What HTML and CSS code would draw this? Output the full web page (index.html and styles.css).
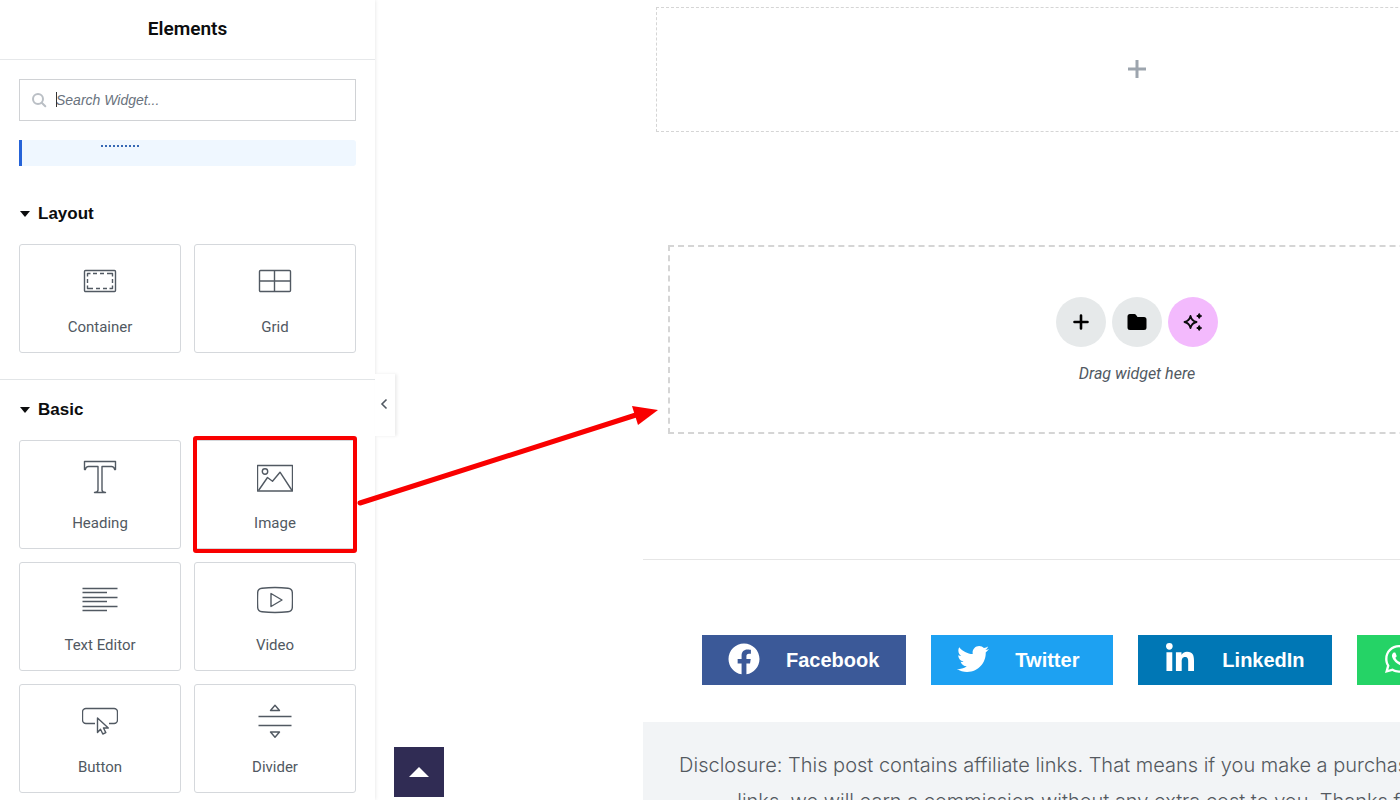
FILE: index.html
```html
<!DOCTYPE html>
<html lang="en">
<head>
    <meta charset="UTF-8">
    <meta name="viewport" content="width=device-width, initial-scale=1.0">
    <title>Elements</title>
    <link rel="stylesheet" href="styles.css">
</head>
<body>
    <aside class="panel">
        <header class="panel-header">
            <h1>Elements</h1>
        </header>

        <div class="panel-top">
            <div class="search">
                <svg width="16" height="16" viewBox="0 0 16 16" aria-hidden="true"><circle cx="7" cy="7" r="5"/><path d="M10.7 10.7l3.6 3.6"/></svg>
                <input type="search" id="search" placeholder="Search Widget..." aria-label="Search Widget">
                <span class="caret"></span>
            </div>
            <div class="notice"><span class="notice-link"></span></div>
        </div>

        <section class="category">
            <h2><button type="button" class="toggle">Layout</button></h2>
            <div class="widgets">
                <button type="button" class="widget">
                    <svg viewBox="0 0 36 36"><rect x="2.5" y="6.5" width="31" height="21" rx="1"/><path d="M5.5 12.5v-3h3M11 9.5h4M18 9.5h4M25 9.5h5.5v3M30.5 15v4M30.5 21.5v3h-3M25 24.5h-4M18 24.5h-4M11 24.5H5.5v-3M5.5 19v-4"/></svg>
                    <span>Container</span>
                </button>
                <button type="button" class="widget">
                    <svg viewBox="0 0 36 36"><rect x="2.5" y="6.5" width="31" height="21" rx="1"/><path d="M17.5 6.5v21M2.5 17h31"/></svg>
                    <span>Grid</span>
                </button>
            </div>
        </section>

        <section class="category bordered">
            <h2><button type="button" class="toggle">Basic</button></h2>
            <div class="widgets">
                <button type="button" class="widget">
                    <svg viewBox="0 0 36 36"><path d="M2.5 1.5h31v8h-.8c-.4-1.800-1.400-3-3.200-3h-9.500v23.500c0 1.600 1 2.300 3.500 2.500h-11c2.500-.2 3.500-.9 3.500-2.500V6.500H6.500c-1.800 0-2.800 1.200-3.200 3h-.8z"/></svg>
                    <span>Heading</span>
                </button>
                <button type="button" class="widget selected">
                    <svg viewBox="0 0 36 36"><rect x=".5" y="5.5" width="35" height="25.5"/><circle cx="8" cy="11.5" r="2.7"/><path d="M1.500 30.500l9-13 5 3.700 7.500-9 12 18.300"/></svg>
                    <span>Image</span>
                </button>
                <button type="button" class="widget">
                    <svg viewBox="0 0 36 36"><path d="M.5 6.500h35M.5 10.500H25M.5 15.500h35M.5 19.500H25M.5 24.500h35M.5 28.500H25"/></svg>
                    <span>Text Editor</span>
                </button>
                <button type="button" class="widget">
                    <svg viewBox="0 0 36 36"><path d="M5 6.200q13-1.400 26 0 4 .5 4.300 4 .4 7.800 0 15.600-.3 3.500-4.300 4-13 1.400-26 0-4-.5-4.300-4-.4-7.800 0-15.600.3-3.500 4.300-4zM14 11.500v13L25 18z"/></svg>
                    <span>Video</span>
                </button>
                <button type="button" class="widget">
                    <svg viewBox="0 0 36 36"><path d="M13 19.500H4a3.500 3.500 0 0 1-3.500-3.500V8A3.500 3.500 0 0 1 4 4.500h28A3.500 3.500 0 0 1 35.500 8v8a3.500 3.500 0 0 1-3.500 3.500h-5M15.500 14v14.500l3-3.200 2.300 4.700 3-1.400-2.300-4.600h4.800z"/></svg>
                    <span>Button</span>
                </button>
                <button type="button" class="widget">
                    <svg viewBox="0 0 36 36"><path d="M18 1.200l4.500 5.300h-9zM1.500 12.500h33M1.500 21.500h33M18 33.300l4.500-5.300h-9z"/></svg>
                    <span>Divider</span>
                </button>
            </div>
        </section>
    </aside>

    <main class="preview">
        <article class="post">
            <div class="section-empty">
                <svg width="18" height="18" viewBox="0 0 18 18" aria-hidden="true"><path d="M9 0v18M0 9h18"/></svg>
            </div>

            <div class="drop-area">
                <div class="drop-buttons">
                    <button type="button" class="round" aria-label="Add new container">
                        <svg width="20" height="20" viewBox="0 0 20 20"><path d="M10 3.500v13M3.500 10h13" fill="none" stroke="#000" stroke-width="2.6" stroke-linecap="round"/></svg>
                    </button>
                    <button type="button" class="round" aria-label="Add template">
                        <svg width="20" height="20" viewBox="0 0 20 20"><path d="M3 2h4.500q.8 0 1.400.7L10.500 5H17q2.500 0 2.500 2.500v8q0 2.500-2.500 2.500H3Q.5 18 .5 15.500v-11Q.5 2 3 2z"/></svg>
                    </button>
                    <button type="button" class="round ai" aria-label="Build with AI">
                        <svg width="20" height="20" viewBox="0 0 20 20"><path d="M7.500 4q1.200 5 6 6-4.800 1-6 6-1.200-5-6-6 4.800-1 6-6z" fill="none" stroke="#0c0d0e" stroke-width="1.8" stroke-linejoin="round"/><path d="M16.200 1.500q.6 2 2.500 2.500-1.900.5-2.500 2.500-.6-2-2.500-2.500 1.900-.5 2.500-2.500zM16.200 13.500q.6 2 2.500 2.500-1.900.5-2.500 2.500-.6-2-2.500-2.500 1.900-.5 2.500-2.500z" stroke="#0c0d0e" stroke-linejoin="round"/></svg>
                    </button>
                </div>
                <p>Drag widget here</p>
            </div>

            <hr>

            <div class="share">
                <a href="#" class="share-btn facebook">
                    <svg viewBox="0 0 512 512"><path d="M504 256C504 119 393 8 256 8S8 119 8 256c0 123.780 90.690 226.380 209.250 245V327.690h-63V256h63v-54.640c0-62.150 37-96.480 93.670-96.480 27.140 0 55.520 4.840 55.520 4.840v61h-31.280c-30.800 0-40.410 19.120-40.410 38.730V256h68.780l-11 71.690h-57.780V501C413.310 482.380 504 379.780 504 256z"/></svg>
                    <span>Facebook</span>
                </a>
                <a href="#" class="share-btn twitter">
                    <svg viewBox="0 0 512 512"><path d="M459.370 151.716c.325 4.548.325 9.097.325 13.645 0 138.720-105.583 298.558-298.558 298.558-59.452 0-114.680-17.219-161.137-47.106 8.447.974 16.568 1.299 25.340 1.299 49.055 0 94.213-16.568 130.274-44.832-46.132-.975-84.792-31.188-98.112-72.772 6.498.974 12.995 1.624 19.818 1.624 9.421 0 18.843-1.300 27.614-3.573-48.081-9.747-84.143-51.980-84.143-102.985v-1.299c13.969 7.797 30.214 12.670 47.431 13.319-28.264-18.843-46.781-51.005-46.781-87.391 0-19.492 5.197-37.360 14.294-52.954 51.655 63.675 129.300 105.258 216.365 109.807-1.624-7.797-2.599-15.918-2.599-24.040 0-57.828 46.782-104.934 104.934-104.934 30.213 0 57.502 12.670 76.670 33.137 23.715-4.548 46.456-13.320 66.599-25.340-7.798 24.366-24.366 44.833-46.132 57.827 21.117-2.273 41.584-8.122 60.426-16.243-14.292 20.791-32.161 39.308-52.628 54.253z"/></svg>
                    <span>Twitter</span>
                </a>
                <a href="#" class="share-btn linkedin">
                    <svg viewBox="0 0 448 512"><path d="M100.280 448H7.400V148.900h92.880zM53.790 108.100C24.090 108.100 0 83.500 0 53.800a53.790 53.790 0 0 1 107.580 0c0 29.700-24.100 54.300-53.790 54.300zM447.900 448h-92.680V302.400c0-34.700-.7-79.200-48.290-79.200-48.290 0-55.690 37.700-55.690 76.700V448h-92.780V148.900h89.080v40.800h1.300c12.400-23.500 42.690-48.300 87.880-48.300 94 0 111.280 61.900 111.280 142.300V448z"/></svg>
                    <span>LinkedIn</span>
                </a>
                <a href="#" class="share-btn whatsapp">
                    <svg viewBox="0 0 448 512"><path d="M380.900 97.100C339 55.100 283.200 32 223.900 32c-122.400 0-222 99.600-222 222 0 39.100 10.200 77.300 29.600 111L0 480l117.700-30.900c32.400 17.700 68.900 27 106.100 27h.1c122.300 0 224.100-99.600 224.100-222 0-59.300-25.200-115-67.100-157zm-157 341.600c-33.200 0-65.700-8.900-94-25.700l-6.700-4-69.800 18.300L72 359.200l-4.400-7c-18.500-29.400-28.200-63.300-28.200-98.200 0-101.700 82.800-184.500 184.600-184.500 49.300 0 95.600 19.200 130.400 54.100 34.800 34.900 56.200 81.200 56.100 130.500 0 101.800-84.900 184.600-186.600 184.600zm101.200-138.200c-5.500-2.800-32.800-16.200-37.900-18-5.100-1.900-8.800-2.800-12.500 2.800-3.700 5.600-14.300 18-17.600 21.800-3.200 3.700-6.500 4.200-12 1.400-32.600-16.300-54-29.100-75.500-66-5.700-9.800 5.700-9.100 16.300-30.300 1.800-3.700.9-6.900-.5-9.700-1.400-2.800-12.500-30.100-17.100-41.200-4.500-10.800-9.100-9.300-12.500-9.500-3.200-.2-6.900-.2-10.600-.2-3.700 0-9.700 1.400-14.800 6.900-5.100 5.600-19.400 19-19.400 46.300 0 27.300 19.900 53.700 22.600 57.400 2.800 3.700 39.100 59.700 94.800 83.800 35.200 15.200 49 16.500 66.600 13.900 10.700-1.600 32.800-13.400 37.400-26.400 4.600-13 4.600-24.100 3.200-26.400-1.300-2.500-5-3.900-10.500-6.600z"/></svg>
                    <span>WhatsApp</span>
                </a>
            </div>

            <p class="disclosure">
                Disclosure: This post contains affiliate links. That means if you make a purchase through any of my<br>
                links, we will earn a commission without any extra cost to you. Thanks for the support.
            </p>
        </article>
    </main>

    <button type="button" class="collapse" aria-label="Hide panel">
        <svg width="8" height="12" viewBox="0 0 8 12"><path d="M6.500 1.500L2 6l4.500 4.500"/></svg>
    </button>
    <a href="#" class="to-top" aria-label="Back to top"></a>

    <!-- arrow from the Image widget to the drop area -->
    <svg class="arrow" width="304" height="108" viewBox="0 0 304 108" aria-hidden="true">
        <path d="M5 103L284 14" fill="none" stroke="#f90000" stroke-width="5" stroke-linecap="round"/>
        <path d="M277 6l26 4-20 15z" fill="#f90000"/>
    </svg>
</body>
</html>
```
FILE: styles.css
```css
* {
    box-sizing: border-box;
}
body {
    margin: 0;
    height: 100vh;
    display: flex;
    overflow: hidden;
    position: relative;
    background: #fff;
    font-family: Roboto, sans-serif;
}
button {
    font-family: inherit;
    padding: 0;
    border: none;
    background: none;
    cursor: pointer;
}

/* left panel */
.panel {
    flex: 0 0 375px;
    overflow: hidden;
    background: #fff;
    box-shadow: 0 0 4px rgba(0, 0, 0, 0.12);
}
.panel-header {
    display: flex;
    align-items: center;
    justify-content: center;
    height: 60px;
    padding-bottom: 3px;
    border-bottom: 1px solid #e6e8ea;
}
.panel-header h1 {
    margin: 0;
    font-size: 19px;
    font-weight: 600;
    color: #0c0d0e;
}
.panel-top {
    padding: 19px 19px 18px;
}
.search {
    display: flex;
    align-items: center;
    height: 42px;
    padding: 0 11px 1px;
    border: 1px solid #d0d2d5;
    position: relative;
}
.search svg {
    fill: none;
    stroke: #babfc5;
    stroke-width: 2;
    stroke-linecap: round;
}
.search input {
    flex: 1;
    min-width: 0;
    padding: 0 0 0 9px;
    border: none;
    outline: none;
    background: none;
    font: italic 14px "Liberation Sans", Arial, sans-serif;
}
.search input::placeholder {
    color: #69727d;
}
.caret {
    position: absolute;
    left: 36px;
    top: 12px;
    width: 1px;
    height: 15px;
    background: #333;
}
.notice {
    height: 26px;
    margin-top: 19px;
    padding: 5px 0 0 79px;
    border-left: 3px solid #2563d8;
    border-radius: 0 3px 3px 0;
    background: #eff7ff;
}
.notice-link {
    display: block;
    width: 38px;
    border-top: 2px dotted #3568b5;
}
.category {
    padding: 0 19px 26px;
}
.bordered {
    border-top: 1px solid #e2e5e7;
}
.category h2 {
    display: flex;
    align-items: center;
    height: 60px;
    margin: 0;
}
.toggle {
    display: flex;
    align-items: center;
    gap: 8px;
    font: bold 17px "Liberation Sans", Arial, sans-serif;
    color: #0c0d0e;
}
.toggle::before {
    content: "";
    margin-left: 1px;
    border: 5px solid transparent;
    border-top: 6px solid #0c0d0e;
    border-bottom: none;
}
.widgets {
    display: grid;
    grid-template-columns: 1fr 1fr;
    gap: 13px;
}
.widget {
    display: flex;
    flex-direction: column;
    align-items: center;
    gap: 18px;
    padding: 19px 0 16px;
    border: 1px solid #d5d8dc;
    border-radius: 3px;
    font-size: 15px;
    line-height: 18px;
    color: #515962;
    position: relative;
}
.widget svg {
    width: 36px;
    height: 36px;
    fill: none;
    stroke: #515962;
    stroke-width: 1.4;
    stroke-linejoin: round;
}
.selected::after {
    content: "";
    position: absolute;
    inset: -5px -2px;
    border: 4px solid #f90000;
    border-radius: 3px;
}

/* page preview */
.preview {
    flex: 1;
    min-width: 0;
    overflow: hidden;
    padding: 7px 0 0 268px;
}
.post {
    width: 988px;
}
.section-empty {
    display: flex;
    align-items: center;
    justify-content: center;
    height: 125px;
    margin: 0 13px;
    padding-bottom: 2px;
    border: 1px dashed #d5d5d5;
}
.section-empty svg {
    stroke: #9da5ae;
    stroke-width: 3;
}
.drop-area {
    display: flex;
    flex-direction: column;
    align-items: center;
    margin: 113px 25px 0;
    padding: 50px 0 48px;
    border: 2px dashed #d5d5d5;
}
.drop-buttons {
    display: flex;
    gap: 6px;
}
.round {
    display: flex;
    align-items: center;
    justify-content: center;
    width: 50px;
    height: 50px;
    border-radius: 50%;
    background: #e6e9ea;
}
.ai {
    background: #f3bafd;
}
.drop-area p {
    margin: 17px 0 0;
    font-size: 16px;
    font-style: italic;
    line-height: 20px;
    color: #515962;
}
hr {
    margin: 125px 0 75px;
    border: none;
    border-top: 1px solid #e6e6e6;
}
.share {
    display: flex;
    gap: 25px;
    padding-left: 59px;
}
.share-btn {
    display: flex;
    flex: none;
    align-items: center;
    height: 50px;
    padding-right: 27px;
    color: #fff;
    font: bold 20px "Liberation Sans", Arial, sans-serif;
    text-decoration: none;
}
.share-btn svg {
    width: 84px;
    height: 32px;
    margin-bottom: 2px;
    fill: #fff;
}
.facebook {
    background: #3b5998;
}
.twitter {
    min-width: 182px;
    background: #1da1f2;
}
.linkedin {
    background: #0077b5;
}
.whatsapp {
    background: #25d366;
}
.disclosure {
    margin: 37px 0 0;
    padding: 25px 0;
    background: #f2f4f6;
    color: #54595f;
    font-family: Inter, "Liberation Sans", sans-serif;
    font-size: 20px;
    font-weight: 300;
    line-height: 36px;
    text-align: center;
    white-space: nowrap;
}

/* things over the page */
.collapse {
    position: absolute;
    left: 375px;
    top: 374px;
    width: 20px;
    height: 62px;
    padding-right: 2px;
    background: #fff;
    box-shadow: 2px 0 3px rgba(0, 0, 0, 0.08);
}
.collapse svg {
    fill: none;
    stroke: #515962;
    stroke-width: 1.6;
}
.to-top {
    position: absolute;
    left: 394px;
    bottom: 3px;
    display: flex;
    align-items: center;
    justify-content: center;
    width: 50px;
    height: 50px;
    background: #302c54;
}
.to-top::before {
    content: "";
    border: 10px solid transparent;
    border-top: none;
    border-bottom-color: #fff;
}
.arrow {
    position: absolute;
    left: 355px;
    top: 400px;
    pointer-events: none;
}
```
